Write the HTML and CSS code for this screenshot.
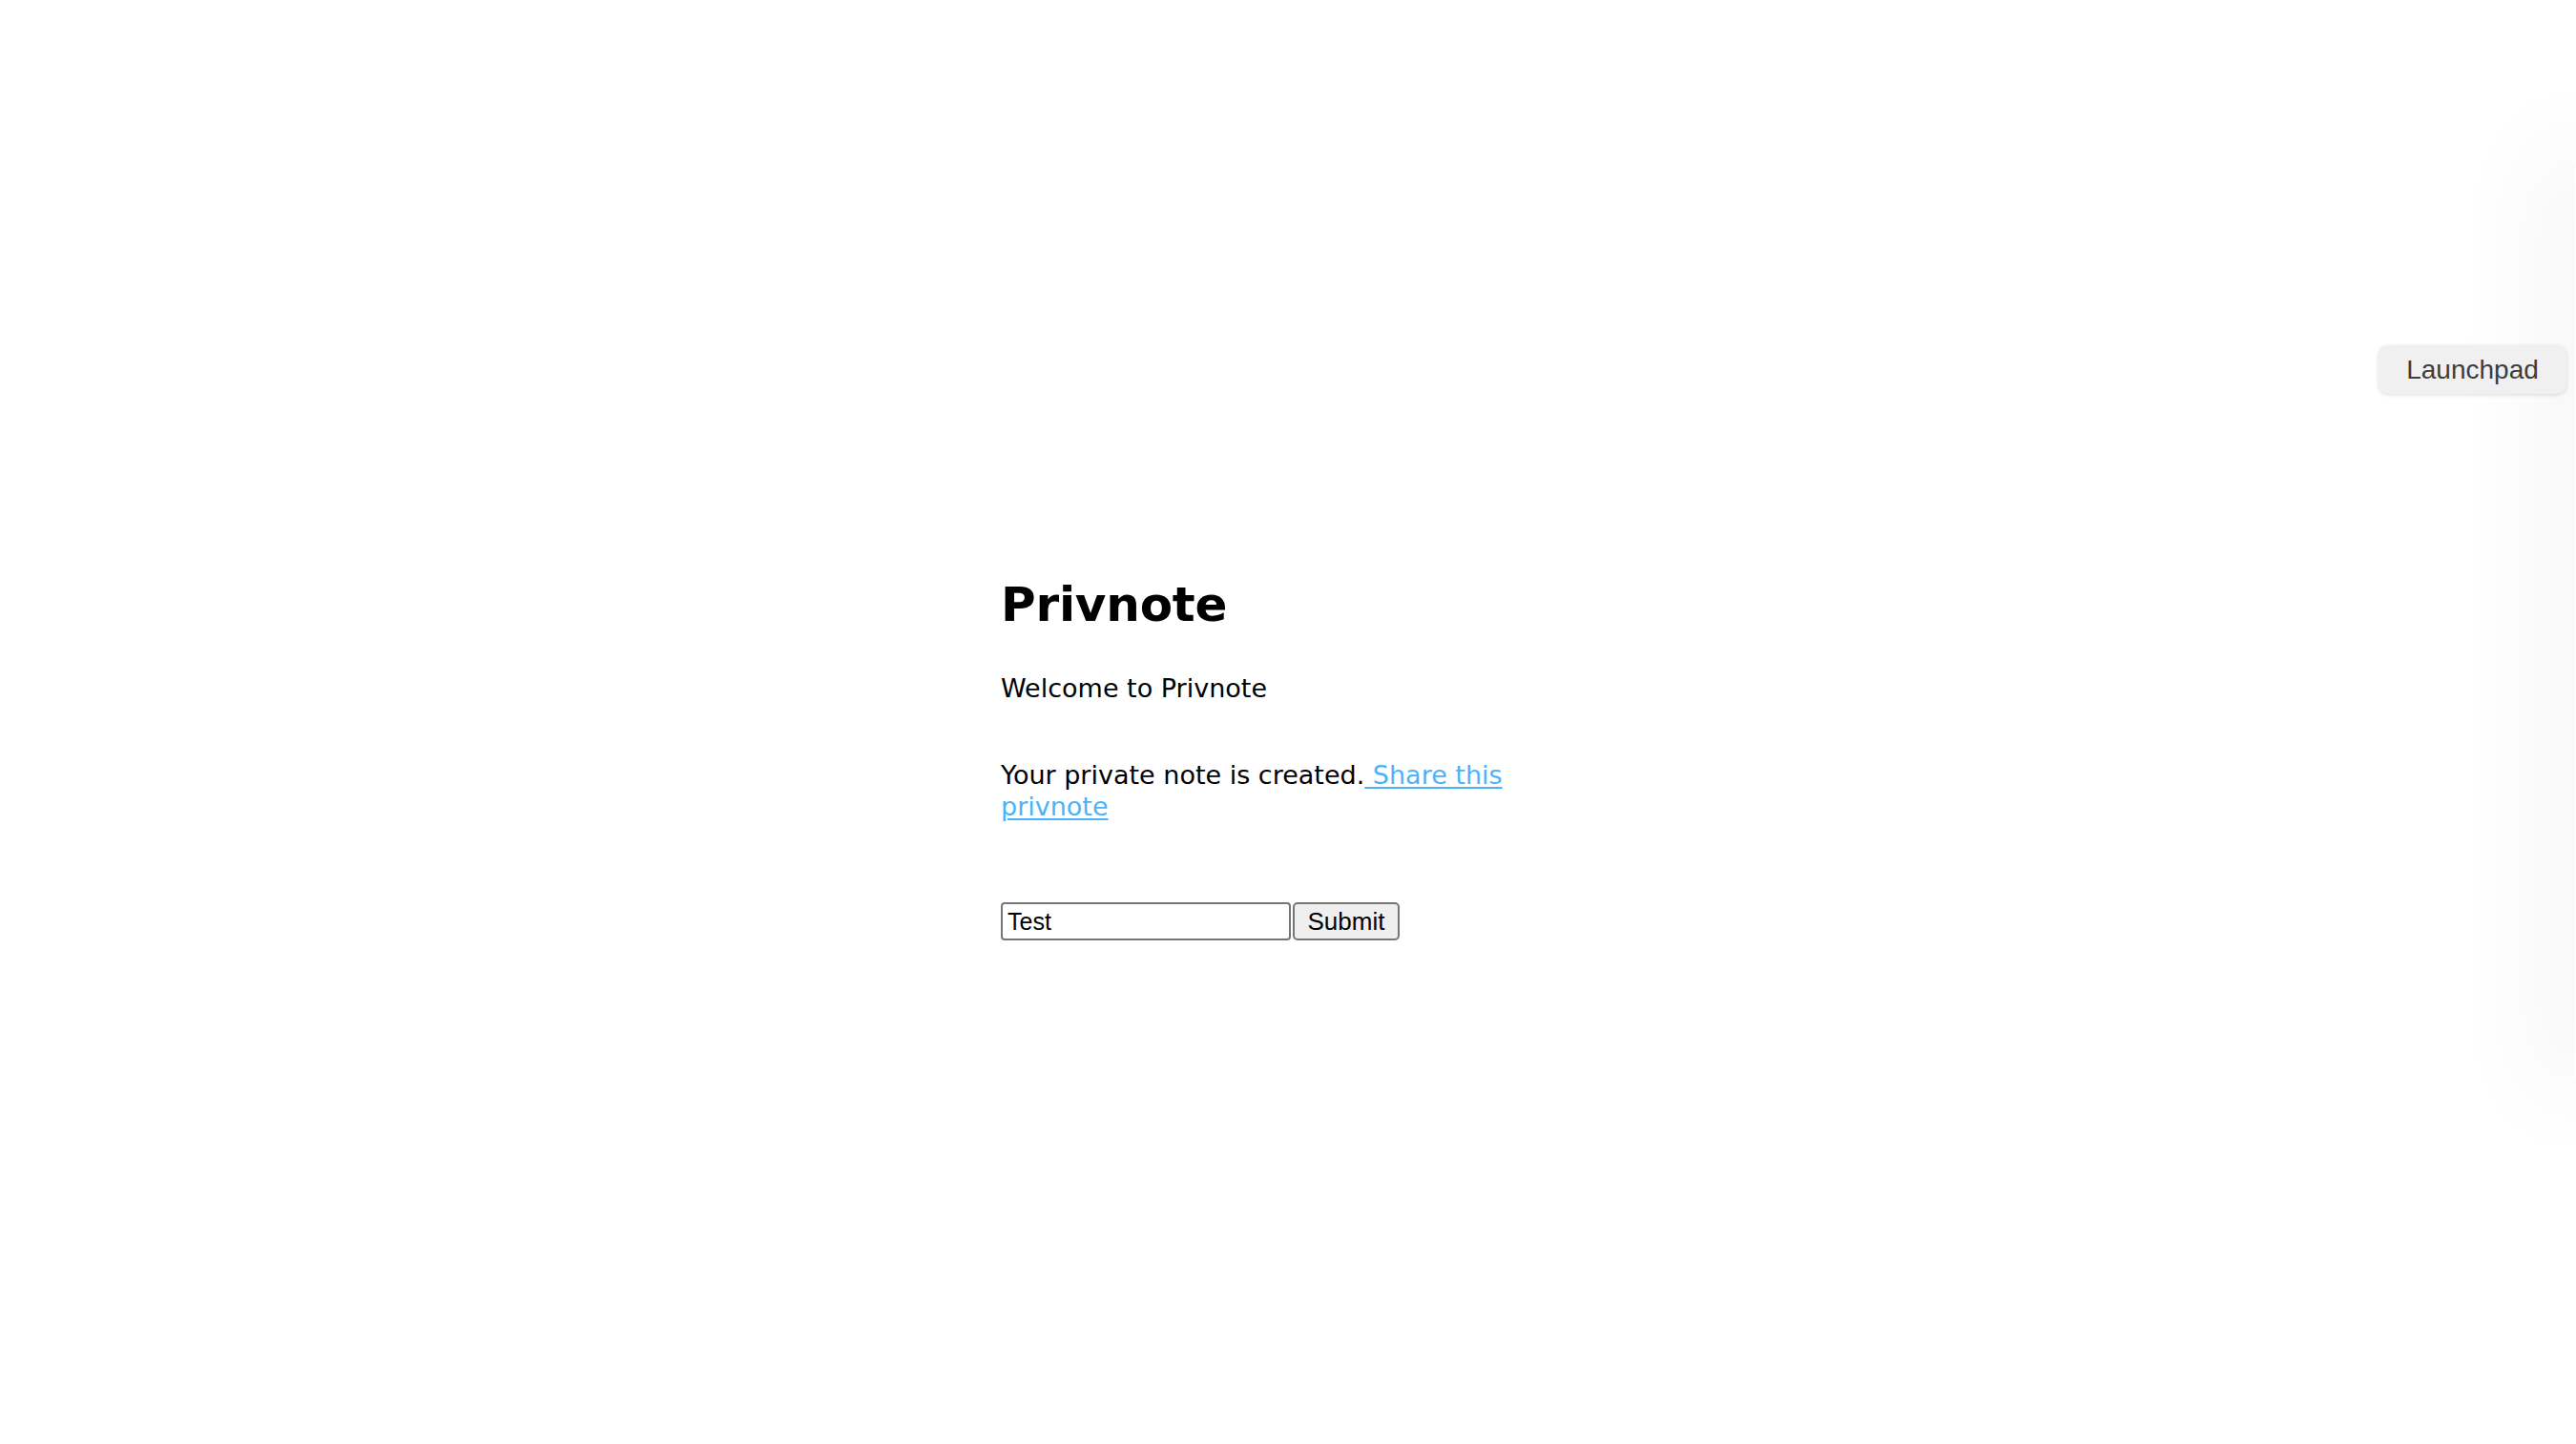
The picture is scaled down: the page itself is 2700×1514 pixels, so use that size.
FILE: index.html
```html
<!DOCTYPE html>
<html lang="en">
<head>
<meta charset="utf-8">
<title>Privnote</title>
<link rel="stylesheet" href="styles.css">
</head>
<body>
<div class="side-shadow"></div>
<button class="launchpad" type="button">Launchpad</button>
<main class="page">
  <h1 class="title">Privnote</h1>
  <p class="welcome">Welcome to Privnote</p>
  <p class="created">Your private note is created.<a class="share" href="#"> Share this privnote</a></p>
  <form class="note-form">
    <input class="note-input" type="text" value="Test">
    <button class="submit" type="button">Submit</button>
  </form>
</main>
</body>
</html>
```
FILE: styles.css
```css
html, body {
  margin: 0;
  padding: 0;
  background: #ffffff;
  overflow: hidden;
}
body {
  width: 2700px;
  height: 1514px;
  font-family: "DejaVu Sans", "Noto Sans", sans-serif;
  color: #000;
}
.page {
  width: 602px;
  margin: 0 auto;
  padding-top: 606px;
  display: flex;
  flex-direction: column;
}
.title {
  margin: 0;
  font-size: 50px;
  line-height: 56px;
  font-weight: bold;
  letter-spacing: -0.2px;
}
.welcome {
  margin: 43px 0 0;
  font-size: 27px;
  line-height: 33px;
}
.created {
  margin: 58px 0 0;
  font-size: 27px;
  line-height: 33px;
}
.share {
  color: #4db2f7;
  text-decoration: underline;
  text-decoration-thickness: 2px;
  text-underline-offset: 3px;
}
.note-form {
  margin-top: 84px;
  display: flex;
  gap: 2px;
  align-items: stretch;
}
.note-input {
  box-sizing: border-box;
  width: 304px;
  height: 40px;
  margin: 0;
  border: 2px solid #767676;
  border-radius: 4px;
  padding: 0 5px;
  font-family: "Liberation Sans", Arial, sans-serif;
  font-size: 25px;
  color: #000;
  background: #fff;
  outline: none;
}
.submit {
  box-sizing: border-box;
  width: 112px;
  height: 40px;
  margin: 0;
  border: 2px solid #767676;
  border-radius: 5px;
  background: #efefef;
  font-family: "Liberation Sans", Arial, sans-serif;
  font-size: 26px;
  color: #000;
  padding: 0;
}
.launchpad {
  position: absolute;
  top: 362px;
  right: 10px;
  width: 197px;
  height: 51px;
  box-sizing: border-box;
  border: none;
  border-radius: 10px;
  background: #f0f0f0;
  box-shadow: 0 1px 4px rgba(0, 0, 0, 0.14);
  font-family: "Liberation Sans", Arial, sans-serif;
  font-size: 28px;
  color: #3d3d3d;
  padding: 0;
  z-index: 2;
}
.side-shadow {
  position: absolute;
  top: 170px;
  right: 0;
  width: 1px;
  height: 960px;
  box-shadow: 0 0 110px 14px rgba(0, 0, 0, 0.12);
  z-index: 1;
}
```
